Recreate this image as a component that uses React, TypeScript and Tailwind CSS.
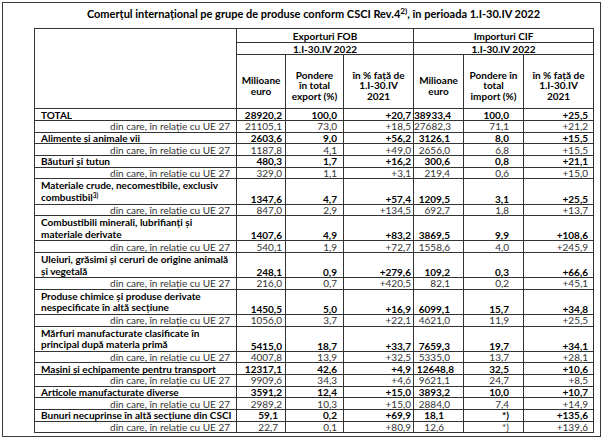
import React from 'react';

type Row = {
  label: React.ReactNode;
  tall?: boolean;
  vals: string[];
  sub: string[];
};

const rows: Row[] = [
  {
    label: 'TOTAL',
    vals: ['28920,2', '100,0', '+20,7', '38933,4', '100,0', '+25,5'],
    sub: ['21105,1', '73,0', '+18,5', '27682,3', '71,1', '+21,2'],
  },
  {
    label: 'Alimente și animale vii',
    vals: ['2603,6', '9,0', '+56,2', '3126,1', '8,0', '+15,5'],
    sub: ['1187,8', '4,1', '+49,0', '2656,0', '6,8', '+15,5'],
  },
  {
    label: 'Băuturi și tutun',
    vals: ['480,3', '1,7', '+16,2', '300,6', '0,8', '+21,1'],
    sub: ['329,0', '1,1', '+3,1', '219,4', '0,6', '+15,0'],
  },
  {
    label: (
      <>
        Materiale crude, necomestibile, exclusiv
        <br />
        combustibil<sup className="text-[6.5px]">3)</sup>
      </>
    ),
    tall: true,
    vals: ['1347,6', '4,7', '+57,4', '1209,5', '3,1', '+25,5'],
    sub: ['847,0', '2,9', '+134,5', '692,7', '1,8', '+13,7'],
  },
  {
    label: (
      <>
        Combustibili minerali, lubrifianți și
        <br />
        materiale derivate
      </>
    ),
    tall: true,
    vals: ['1407,6', '4,9', '+83,2', '3869,5', '9,9', '+108,6'],
    sub: ['540,1', '1,9', '+72,7', '1558,6', '4,0', '+245,9'],
  },
  {
    label: (
      <>
        Uleiuri, grăsimi și ceruri de origine animală
        <br />
        și vegetală
      </>
    ),
    tall: true,
    vals: ['248,1', '0,9', '+279,6', '109,2', '0,3', '+66,6'],
    sub: ['216,0', '0,7', '+420,5', '82,1', '0,2', '+45,1'],
  },
  {
    label: (
      <>
        Produse chimice și produse derivate
        <br />
        nespecificate în altă secțiune
      </>
    ),
    tall: true,
    vals: ['1450,5', '5,0', '+16,9', '6099,1', '15,7', '+34,8'],
    sub: ['1056,0', '3,7', '+22,1', '4621,0', '11,9', '+25,5'],
  },
  {
    label: (
      <>
        Mărfuri manufacturate clasificate în
        <br />
        principal după materia primă
      </>
    ),
    tall: true,
    vals: ['5415,0', '18,7', '+33,7', '7659,3', '19,7', '+34,1'],
    sub: ['4007,8', '13,9', '+32,5', '5335,0', '13,7', '+28,1'],
  },
  {
    label: 'Mașini și echipamente pentru transport',
    vals: ['12317,1', '42,6', '+4,9', '12648,8', '32,5', '+10,6'],
    sub: ['9909,6', '34,3', '+4,6', '9621,1', '24,7', '+8,5'],
  },
  {
    label: 'Articole manufacturate diverse',
    vals: ['3591,2', '12,4', '+15,0', '3893,2', '10,0', '+10,7'],
    sub: ['2989,2', '10,3', '+15,0', '2884,0', '7,4', '+14,9'],
  },
  {
    label: 'Bunuri necuprinse în altă secțiune din CSCI',
    vals: ['59,1', '0,2', '+69,9', '18,1', '*)', '+135,6'],
    sub: ['22,7', '0,1', '+80,9', '12,6', '*)', '+139,6'],
  },
];

// right padding per value column, read off the reference
const pads = ['pr-[3px]', 'pr-[6px]', 'pr-[2px]', 'pr-[13px]', 'pr-[14px]', 'pr-[5px]'];

const cell = 'border border-[#333] py-0';

function ValueCells({ vals, tall, last }: { vals: string[]; tall?: boolean; last?: boolean }) {
  return (
    <>
      {vals.map((v, i) => {
        let pad = pads[i];
        // the CSCI row sits a little further in, and 12648,8 spills out a bit
        if (last && i === 0) pad = 'pr-[7px]';
        if (last && i === 3) pad = 'pr-[19px]';
        if (v === '12648,8') pad = 'pr-[9px]';
        return (
          <td key={i} className={`${cell} pl-0 ${pad} text-right ${tall ? 'align-bottom' : 'align-middle'}`}>
            {v}
          </td>
        );
      })}
    </>
  );
}

export default function App() {
  return (
    <div className="w-[605px] h-[440px] bg-white pt-[2px] pl-[2px] font-[Lato,sans-serif] text-black">
      <div className="w-[599px] h-[435px] border border-[#3a3a3a]">
        <div className="ml-[31px] w-[559px]">
          <h1 className="pt-[3px] mb-[6px] text-center text-[11px] leading-[16px] font-bold">
            Comerțul internațional pe grupe de produse conform CSCI Rev.4<sup>2)</sup>, în perioada 1.I-30.IV 2022
          </h1>

          <table className="table-fixed border-collapse w-[559px] text-[10px] leading-[10px]">
            <colgroup>
              <col className="w-[202px]" />
              <col className="w-[49px]" />
              <col className="w-[58px]" />
              <col className="w-[70px]" />
              <col className="w-[50px]" />
              <col className="w-[60px]" />
              <col className="w-[70px]" />
            </colgroup>
            <thead className="font-bold">
              <tr className="h-[14px]">
                <th rowSpan={3} className={`${cell} px-0`} />
                <th colSpan={3} className={`${cell} px-0 text-center`}>Exporturi FOB</th>
                <th colSpan={3} className={`${cell} px-0 text-center`}>Importuri CIF</th>
              </tr>
              <tr className="h-[12px]">
                <th colSpan={3} className={`${cell} px-0 text-center`}>1.I-30.IV 2022</th>
                <th colSpan={3} className={`${cell} px-0 text-center`}>1.I-30.IV 2022</th>
              </tr>
              <tr className="h-[54px] leading-[10.6px]">
                <th className={`${cell} px-0 pt-[8px] text-center align-middle`}>
                  Milioane
                  <br />
                  euro
                </th>
                <th className={`${cell} px-0 pt-[8px] text-center align-middle`}>
                  Pondere
                  <br />
                  în total
                  <br />
                  export (%)
                </th>
                <th className={`${cell} px-0 pt-[8px] text-center align-middle`}>
                  în % față de
                  <br />
                  1.I-30.IV
                  <br />
                  2021
                </th>
                <th className={`${cell} px-0 pt-[8px] text-center align-middle`}>
                  Milioane
                  <br />
                  euro
                </th>
                <th className={`${cell} px-0 pt-[8px] text-center align-middle`}>
                  Pondere în
                  <br />
                  total
                  <br />
                  import (%)
                </th>
                <th className={`${cell} px-0 pt-[8px] text-center align-middle`}>
                  în % față de
                  <br />
                  1.I-30.IV
                  <br />
                  2021
                </th>
              </tr>
            </thead>
            <tbody>
              {rows.map((r, idx) => {
                const last = idx === rows.length - 1;
                const height = idx === 0 ? 'h-[12px]' : r.tall ? 'h-[25.2px]' : 'h-[11.8px]';
                return (
                  <React.Fragment key={idx}>
                    <tr className={`${height} font-bold`}>
                      <td
                        className={`${cell} pl-[6px] pr-0 text-left ${r.tall ? 'align-bottom leading-[11.6px]' : 'align-middle'}`}
                      >
                        {r.label}
                      </td>
                      <ValueCells vals={r.vals} tall={r.tall} last={last} />
                    </tr>
                    <tr className="h-[11.6px] text-[#333]">
                      <td className={`${cell} pl-0 pr-[6px] text-right align-middle`}>din care, în relație cu UE 27</td>
                      <ValueCells vals={r.sub} last={last} />
                    </tr>
                  </React.Fragment>
                );
              })}
            </tbody>
          </table>
        </div>
      </div>
    </div>
  );
}
